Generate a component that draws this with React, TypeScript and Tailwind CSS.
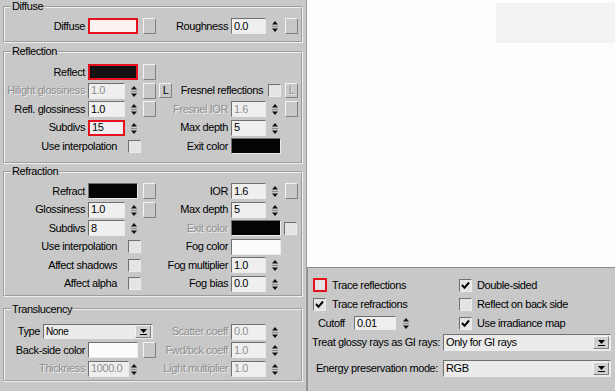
import React from "react";
import clsx from "clsx";

type Node = React.ReactNode;

const SUNKEN = "border border-t-[#707070] border-l-[#707070] border-b-[#ececec] border-r-[#ececec]";
const RAISED = "border border-t-[#f4f4f4] border-l-[#f4f4f4] border-b-[#808080] border-r-[#808080]";

function T({ children, off }: { children: Node; off?: boolean }) {
  return (
    <span className={clsx("whitespace-nowrap", off ? "text-[#8f8f8f] [text-shadow:1px_1px_0_#eeeeee]" : "text-black")}>
      {children}
    </span>
  );
}

function Spin({ className }: { className?: string }) {
  return (
    <svg width="8" height="16" viewBox="0 0 8 16" className={clsx("shrink-0", className)}>
      <polygon points="1,6.5 4,3 7,6.5" fill="#111" />
      <line x1="1" y1="8.5" x2="7" y2="8.5" stroke="#8a8a8a" />
      <polygon points="1,10.5 4,14 7,10.5" fill="#111" />
    </svg>
  );
}

function Field({ v, w = "w-[37px]", red, off, h = "h-[16px]" }: { v: string; w?: string; red?: boolean; off?: boolean; h?: string }) {
  return (
    <div
      className={clsx(
        "flex shrink-0 items-center bg-[#efefef] pl-[2px] leading-none",
        w,
        h,
        red ? "border-2 border-[#e3121c]" : SUNKEN,
        off ? "text-[#8f8f8f]" : "text-black"
      )}
    >
      {v}
    </div>
  );
}

function Num({ v, red, off, right }: { v: string; red?: boolean; off?: boolean; right?: boolean }) {
  return (
    <>
      <Field v={v} red={red} off={off} w={right ? "w-[35px]" : "w-[37px]"} />
      <Spin className="ml-[5px]" />
    </>
  );
}

function Btn({ className }: { className?: string }) {
  return <div className={clsx("h-[16px] w-[13px] shrink-0 bg-[#c8c8c8]", RAISED, className)} />;
}

function LBtn({ off, className }: { off?: boolean; className?: string }) {
  return (
    <div className={clsx("flex h-[15px] w-[13px] shrink-0 items-center justify-center bg-[#c8c8c8] leading-none", RAISED, className)}>
      <T off={off}>L</T>
    </div>
  );
}

function Swatch({ color, red }: { color: string; red?: boolean }) {
  return <div className={clsx("h-[16px] w-[50px] shrink-0", color, red ? "border-2 border-[#e3121c]" : SUNKEN)} />;
}

function Check({ on, red, className }: { on?: boolean; red?: boolean; className?: string }) {
  return (
    <div
      className={clsx(
        "flex shrink-0 items-center justify-center bg-[#e4e4e4]",
        red ? "h-[14px] w-[14px] border-2 border-[#e3121c]" : clsx("h-[13px] w-[13px]", SUNKEN),
        className
      )}
    >
      {on && (
        <svg width="9" height="9" viewBox="0 0 9 9">
          <polyline points="1,4 3.5,6.8 8,1.5" fill="none" stroke="#000" strokeWidth="2" />
        </svg>
      )}
    </div>
  );
}

function Select({ v, w, h = "h-[17px]", small }: { v: string; w: string; h?: string; small?: boolean }) {
  return (
    <div className={clsx("flex shrink-0 items-center justify-between bg-[#ebebeb] pl-[2px]", w, h, SUNKEN)}>
      <span className={clsx("whitespace-nowrap", small && "text-[10px]")}>{v}</span>
      <div className={clsx("mr-[1px] flex h-[13px] w-[16px] flex-col items-center justify-center gap-[1px] bg-[#d0d0d0]", RAISED)}>
        <svg width="7" height="4" viewBox="0 0 7 4">
          <polygon points="0,0 7,0 3.5,4" fill="#000" />
        </svg>
        <div className="h-[1px] w-[7px] bg-[#000]" />
      </div>
    </div>
  );
}

type RowProps = {
  l?: Node;
  lOff?: boolean;
  left?: Node;
  r?: Node;
  rOff?: boolean;
  right?: Node;
  lw?: string;
  lc?: string;
  rw?: string;
  rc?: string;
};

function Row({ l, lOff, left, r, rOff, right, lw = "w-[80px]", lc = "ml-[3px] w-[92px]", rw = "w-[48px]", rc = "ml-[3px]" }: RowProps) {
  return (
    <div className="flex h-[16px] items-center">
      <div className={clsx("flex shrink-0 justify-end", lw)}>{l && <T off={lOff}>{l}</T>}</div>
      <div className={clsx("flex shrink-0 items-center", lc)}>{left}</div>
      <div className={clsx("flex shrink-0 justify-end", rw)}>{r && <T off={rOff}>{r}</T>}</div>
      <div className={clsx("flex items-center", rc)}>{right}</div>
    </div>
  );
}

// rows where a checkbox sits after its label
const CK_W = "w-[112px]";
const CK_C = "ml-[11px] w-[52px]";

function Group({ title, children, className }: { title: string; children: Node; className?: string }) {
  return (
    <fieldset className={clsx("w-[300px] border-2 border-[#f0f0f0] [border-style:groove]", className)}>
      <legend className="ml-[6px] px-[1px] leading-[13px]">{title}</legend>
      {children}
    </fieldset>
  );
}

export default function App() {
  return (
    <div className="flex h-[391px] w-[615px] overflow-hidden font-['Liberation_Sans',Arial,sans-serif] text-[11px] leading-[13px] tracking-[-0.4px] text-black">
      <div className="flex h-full w-[307px] shrink-0 flex-col border-r border-r-[#9a9a9a] bg-[#c8c8c8] pl-[3px]">
        <Group title="Diffuse" className="pb-[7px] pt-[5px]">
          <Row
            l="Diffuse"
            left={
              <>
                <Swatch color="bg-[#fbf1f1]" red />
                <Btn className="ml-[5px]" />
              </>
            }
            r="Roughness"
            right={
              <>
                <Num v="0.0" right />
                <Btn className="ml-[6px]" />
              </>
            }
          />
        </Group>

        <Group title="Reflection" className="mt-[2px] pb-[8px] pt-[6px]">
          <div className="flex flex-col gap-[2.5px]">
            <Row
              l="Reflect"
              left={
                <>
                  <Swatch color="bg-[#121212]" red />
                  <Btn className="ml-[5px]" />
                </>
              }
            />
            <Row
              l="Hilight glossiness"
              lOff
              left={
                <>
                  <Num v="1.0" off />
                  <Btn className="ml-[5px]" />
                  <LBtn className="ml-[3px]" />
                </>
              }
              r="Fresnel reflections"
              rw="w-[83px]"
              rc="ml-[5px]"
              right={
                <>
                  <Check />
                  <LBtn off className="ml-[4px]" />
                </>
              }
            />
            <Row
              l="Refl. glossiness"
              left={
                <>
                  <Num v="1.0" />
                  <Btn className="ml-[5px]" />
                </>
              }
              r="Fresnel IOR"
              rOff
              right={
                <>
                  <Num v="1.6" off right />
                  <Btn className="ml-[6px]" />
                </>
              }
            />
            <Row l="Subdivs" left={<Num v="15" red />} r="Max depth" right={<Num v="5" right />} />
            <Row l="Use interpolation" lw={CK_W} lc={CK_C} left={<Check />} r="Exit color" right={<Swatch color="bg-[#050505]" />} />
          </div>
        </Group>

        <Group title="Refraction" className="mt-[1px] pb-[3px] pt-[5px]">
          <div className="flex flex-col gap-[2.6px]">
            <Row
              l="Refract"
              left={
                <>
                  <Swatch color="bg-[#050505]" />
                  <Btn className="ml-[5px]" />
                </>
              }
              r="IOR"
              right={
                <>
                  <Num v="1.6" right />
                  <Btn className="ml-[6px]" />
                </>
              }
            />
            <Row
              l="Glossiness"
              left={
                <>
                  <Num v="1.0" />
                  <Btn className="ml-[5px]" />
                </>
              }
              r="Max depth"
              right={<Num v="5" right />}
            />
            <Row
              l="Subdivs"
              left={<Num v="8" />}
              r="Exit color"
              rOff
              right={
                <>
                  <Swatch color="bg-[#050505]" />
                  <Check className="ml-[3px]" />
                </>
              }
            />
            <Row l="Use interpolation" lw={CK_W} lc={CK_C} left={<Check />} r="Fog color" right={<Swatch color="bg-[#fcfcfc]" />} />
            <Row l="Affect shadows" lw={CK_W} lc={CK_C} left={<Check />} r="Fog multiplier" right={<Num v="1.0" right />} />
            <Row l="Affect alpha" lw={CK_W} lc={CK_C} left={<Check />} r="Fog bias" right={<Num v="0.0" right />} />
          </div>
        </Group>

        <Group title="Translucency" className="mt-[6px] pb-[3px] pt-[8px]">
          <div className="flex flex-col gap-[2.5px]">
            <Row
              l="Type"
              lw="w-[35px]"
              lc="ml-[3px] w-[137px]"
              left={<Select v="None" w="w-[110px]" h="h-[15px]" small />}
              r="Scatter coeff"
              rOff
              right={<Num v="0.0" off right />}
            />
            <Row
              l="Back-side color"
              left={
                <>
                  <Swatch color="bg-[#fcfcfc]" />
                  <Btn className="ml-[5px]" />
                </>
              }
              r="Fwd/bck coeff"
              rOff
              right={<Num v="1.0" off right />}
            />
            <Row
              l="Thickness"
              lOff
              left={
                <>
                  <Field v="1000.0" w="w-[41px]" off />
                  <Spin className="ml-[1px]" />
                </>
              }
              r="Light multiplier"
              rOff
              right={<Num v="1.0" off right />}
            />
          </div>
        </Group>
      </div>

      <div className="flex h-full flex-1 flex-col">
        <div className="h-[267px] bg-[#fdfdfd] pt-[3px]">
          <div className="ml-auto h-[40px] w-[119px] bg-[#f3f3f3]" />
        </div>
        <div className="flex flex-1 flex-col border-l border-t border-[#8c8c8c] bg-[#c8c8c8] pl-[5px] pt-[10px]">
          <div className="flex flex-col gap-[5px]">
            <div className="flex h-[14px] items-center">
              <div className="flex w-[146px] items-center">
                <Check red />
                <span className="ml-[5px]">Trace reflections</span>
              </div>
              <Check on />
              <span className="ml-[5px]">Double-sided</span>
            </div>
            <div className="flex h-[14px] items-center">
              <div className="flex w-[146px] items-center">
                <Check on />
                <span className="ml-[6px]">Trace refractions</span>
              </div>
              <Check />
              <span className="ml-[5px]">Reflect on back side</span>
            </div>
            <div className="flex h-[14px] items-center">
              <div className="flex w-[146px] items-center">
                <span className="ml-[5px] w-[36px]">Cutoff</span>
                <Field v="0.01" w="w-[42px]" h="h-[14px]" />
                <Spin className="ml-[6px]" />
              </div>
              <Check on />
              <span className="ml-[5px]">Use irradiance map</span>
            </div>
          </div>
          <div className="mt-[4px] flex h-[17px] items-center">
            <div className="flex w-[127px] justify-end">
              <T>Treat glossy rays as GI rays:</T>
            </div>
            <div className="ml-[3px]">
              <Select v="Only for GI rays" w="w-[168px]" />
            </div>
          </div>
          <div className="mt-[9px] flex h-[17px] items-center">
            <div className="flex w-[125px] justify-end">
              <T>Energy preservation mode:</T>
            </div>
            <div className="ml-[5px]">
              <Select v="RGB" w="w-[168px]" />
            </div>
          </div>
        </div>
      </div>
    </div>
  );
}
